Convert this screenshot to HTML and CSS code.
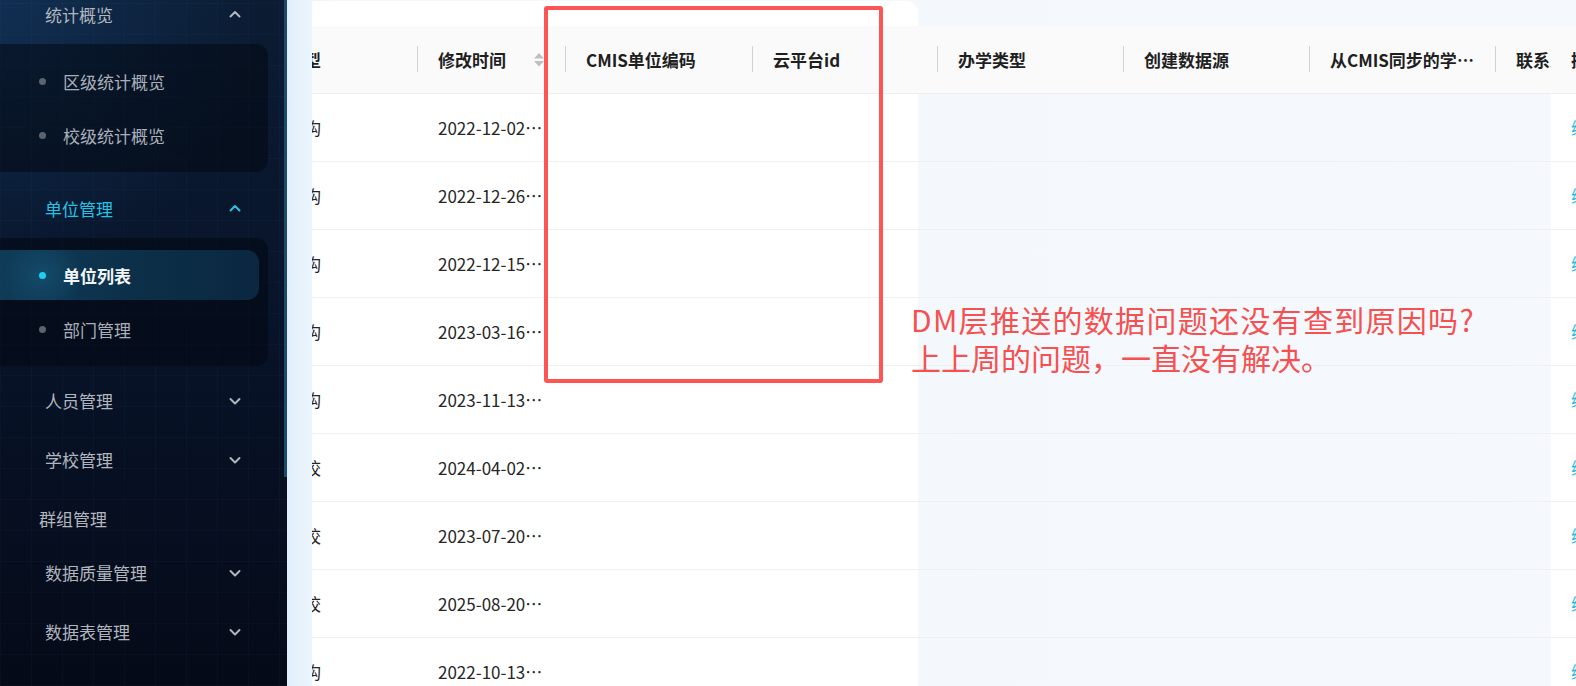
FILE: index.html
```html
<!DOCTYPE html>
<html lang="zh-CN">
<head>
    <meta charset="UTF-8">
    <meta name="viewport" content="width=device-width, initial-scale=1.0">
    <title>单位列表</title>
    <link rel="stylesheet" href="styles.css">
</head>
<body>
    <aside class="sidebar">
        <nav class="menu">
            <div class="menu-title first">
                <span>统计概览</span>
                <svg class="arrow" viewBox="0 0 12 8"><path d="M1.5 6.5 L6 2 L10.5 6.5"/></svg>
            </div>
            <div class="submenu">
                <div class="sub-item"><span class="dot"></span>区级统计概览</div>
                <div class="sub-item"><span class="dot"></span>校级统计概览</div>
            </div>

            <div class="menu-title open">
                <span>单位管理</span>
                <svg class="arrow" viewBox="0 0 12 8"><path d="M1.5 6.5 L6 2 L10.5 6.5"/></svg>
            </div>
            <div class="submenu">
                <div class="sub-item selected"><span class="dot"></span>单位列表</div>
                <div class="sub-item"><span class="dot"></span>部门管理</div>
            </div>

            <div class="menu-title">
                <span>人员管理</span>
                <svg class="arrow" viewBox="0 0 12 8"><path d="M1.5 2 L6 6.5 L10.5 2"/></svg>
            </div>
            <div class="menu-title">
                <span>学校管理</span>
                <svg class="arrow" viewBox="0 0 12 8"><path d="M1.5 2 L6 6.5 L10.5 2"/></svg>
            </div>
            <div class="menu-leaf">群组管理</div>
            <div class="menu-title">
                <span>数据质量管理</span>
                <svg class="arrow" viewBox="0 0 12 8"><path d="M1.5 2 L6 6.5 L10.5 2"/></svg>
            </div>
            <div class="menu-title">
                <span>数据表管理</span>
                <svg class="arrow" viewBox="0 0 12 8"><path d="M1.5 2 L6 6.5 L10.5 2"/></svg>
            </div>
        </nav>
        <div class="scroll-thumb"></div>
    </aside>

    <main class="main">
        <div class="card">
            <div class="card-top"></div>
            <div class="table">
                <div class="row head">
                    <div class="cell c-type">单位类型</div>
                    <div class="cell c-time th">
                        <span class="ellipsis">修改时间</span>
                        <svg class="sorter" viewBox="0 0 12 16">
                            <polygon points="1,6.5 6,1 11,6.5"/>
                            <polygon points="1,9 11,9 6,14.5"/>
                        </svg>
                    </div>
                    <div class="cell c-cmis th">CMIS单位编码</div>
                    <div class="cell c-cloud th">云平台id</div>
                    <div class="cell c-kind th">办学类型</div>
                    <div class="cell c-src th">创建数据源</div>
                    <div class="cell c-sync th"><span class="ellipsis">从CMIS同步的学校类型</span></div>
                    <div class="cell c-contact th">联系人</div>
                    <div class="cell c-op">操作</div>
                </div>

                <div class="row">
                    <div class="cell c-type">教育机构</div>
                    <div class="cell c-time"><span class="ellipsis">2022-12-02 10:21:36</span></div>
                    <div class="cell c-cmis"></div><div class="cell c-cloud"></div><div class="cell c-kind"></div>
                    <div class="cell c-src"></div><div class="cell c-sync"></div><div class="cell c-contact"></div>
                    <div class="cell c-op"><a class="link">编辑</a></div>
                </div>
                <div class="row">
                    <div class="cell c-type">教育机构</div>
                    <div class="cell c-time"><span class="ellipsis">2022-12-26 15:08:12</span></div>
                    <div class="cell c-cmis"></div><div class="cell c-cloud"></div><div class="cell c-kind"></div>
                    <div class="cell c-src"></div><div class="cell c-sync"></div><div class="cell c-contact"></div>
                    <div class="cell c-op"><a class="link">编辑</a></div>
                </div>
                <div class="row">
                    <div class="cell c-type">教育机构</div>
                    <div class="cell c-time"><span class="ellipsis">2022-12-15 09:44:50</span></div>
                    <div class="cell c-cmis"></div><div class="cell c-cloud"></div><div class="cell c-kind"></div>
                    <div class="cell c-src"></div><div class="cell c-sync"></div><div class="cell c-contact"></div>
                    <div class="cell c-op"><a class="link">编辑</a></div>
                </div>
                <div class="row">
                    <div class="cell c-type">教育机构</div>
                    <div class="cell c-time"><span class="ellipsis">2023-03-16 11:30:05</span></div>
                    <div class="cell c-cmis"></div><div class="cell c-cloud"></div><div class="cell c-kind"></div>
                    <div class="cell c-src"></div><div class="cell c-sync"></div><div class="cell c-contact"></div>
                    <div class="cell c-op"><a class="link">编辑</a></div>
                </div>
                <div class="row">
                    <div class="cell c-type">教育机构</div>
                    <div class="cell c-time"><span class="ellipsis">2023-11-13 16:52:27</span></div>
                    <div class="cell c-cmis"></div><div class="cell c-cloud"></div><div class="cell c-kind"></div>
                    <div class="cell c-src"></div><div class="cell c-sync"></div><div class="cell c-contact"></div>
                    <div class="cell c-op"><a class="link">编辑</a></div>
                </div>
                <div class="row">
                    <div class="cell c-type">中小学校</div>
                    <div class="cell c-time"><span class="ellipsis">2024-04-02 08:15:40</span></div>
                    <div class="cell c-cmis"></div><div class="cell c-cloud"></div><div class="cell c-kind"></div>
                    <div class="cell c-src"></div><div class="cell c-sync"></div><div class="cell c-contact"></div>
                    <div class="cell c-op"><a class="link">编辑</a></div>
                </div>
                <div class="row">
                    <div class="cell c-type">中小学校</div>
                    <div class="cell c-time"><span class="ellipsis">2023-07-20 14:03:58</span></div>
                    <div class="cell c-cmis"></div><div class="cell c-cloud"></div><div class="cell c-kind"></div>
                    <div class="cell c-src"></div><div class="cell c-sync"></div><div class="cell c-contact"></div>
                    <div class="cell c-op"><a class="link">编辑</a></div>
                </div>
                <div class="row">
                    <div class="cell c-type">中小学校</div>
                    <div class="cell c-time"><span class="ellipsis">2025-08-20 10:47:19</span></div>
                    <div class="cell c-cmis"></div><div class="cell c-cloud"></div><div class="cell c-kind"></div>
                    <div class="cell c-src"></div><div class="cell c-sync"></div><div class="cell c-contact"></div>
                    <div class="cell c-op"><a class="link">编辑</a></div>
                </div>
                <div class="row">
                    <div class="cell c-type">教育机构</div>
                    <div class="cell c-time"><span class="ellipsis">2022-10-13 17:26:33</span></div>
                    <div class="cell c-cmis"></div><div class="cell c-cloud"></div><div class="cell c-kind"></div>
                    <div class="cell c-src"></div><div class="cell c-sync"></div><div class="cell c-contact"></div>
                    <div class="cell c-op"><a class="link">编辑</a></div>
                </div>
            </div>
        </div>
    </main>

    <div class="mark-box"></div>
    <div class="mark-note"><span class="wide">DM层推送的数据问题还没有查到原因吗?</span><br>上上周的问题，一直没有解决。</div>
</body>
</html>
```

FILE: styles.css
```css
* {
    box-sizing: border-box;
}
body {
    margin: 0;
    height: 686px;
    display: flex;
    overflow: hidden;
    font-family: "Noto Sans CJK SC", "Noto Sans", sans-serif;
    font-size: 17px;
    position: relative;
}

/* sidebar */
.sidebar {
    width: 287px;
    flex-shrink: 0;
    position: relative;
    background:
        repeating-linear-gradient(90deg, rgba(90, 150, 210, 0.035) 0 1px, transparent 1px 31px),
        repeating-linear-gradient(0deg, rgba(90, 150, 210, 0.035) 0 1px, transparent 1px 31px),
        radial-gradient(ellipse 90% 40% at 0 0, rgba(24, 70, 120, 0.45), transparent),
        linear-gradient(180deg, #0b1c33 0%, #08142a 45%, #050a18 100%);
    color: #b1b6be;
}
.menu {
    margin-top: -16px;
    width: 284px;
}
.menu-title {
    height: 59px;
    display: flex;
    align-items: center;
    justify-content: space-between;
    padding: 0 43px 0 45px;
    margin-top: 5px;
}
.menu-title.first,
.menu-title.open {
    height: 60px;
}
.menu-title.first {
    margin-top: 0;
}
.menu-title.open {
    margin-top: 6px;
}
.menu-title + .menu-title,
.menu-leaf + .menu-title {
    margin-top: 0;
}
.menu-title.open {
    color: #25c3e3;
}
.arrow {
    width: 12px;
    height: 8px;
    fill: none;
    stroke: currentColor;
    stroke-width: 2;
    stroke-linecap: round;
    stroke-linejoin: round;
}
.menu-leaf {
    height: 54px;
    padding: 12px 0 0 39px;
    line-height: 36px;
}
.submenu {
    width: 268px;
    padding: 12px 0;
    display: flex;
    flex-direction: column;
    gap: 4px;
    background: rgba(2, 6, 14, 0.5);
    border-radius: 0 12px 12px 0;
}
.sub-item {
    height: 50px;
    width: 259px;
    display: flex;
    align-items: center;
    padding-left: 39px;
    border-radius: 0 12px 12px 0;
    color: #a9afb8;
}
.dot {
    width: 7px;
    height: 7px;
    border-radius: 50%;
    background: #5c636e;
    margin-right: 17px;
}
.sub-item.selected {
    color: #f2f5f8;
    font-weight: 600;
    background:
        radial-gradient(circle 40px at 43px 50%, rgba(30, 110, 150, 0.35), transparent),
        linear-gradient(90deg, #0f3b57 0%, #0c2f48 55%, #0b2741 100%);
}
.sub-item.selected .dot {
    background: #1fd0f3;
}
.scroll-thumb {
    position: absolute;
    right: 0;
    top: 0;
    width: 3px;
    height: 477px;
    background: #1a4a70;
}

/* main */
.main {
    flex: 1;
    min-width: 0;
    padding: 1px 0 0 25px;
    background:
        linear-gradient(90deg, #e1eefb 0, #eaf4fd 22px, #f3f8fd 60px, #f5f9fd 100%);
}
.card {
    overflow: hidden;
    height: 100%;
}
.card-top {
    width: 606px;
    height: 25px;
    background: #fff;
    border-radius: 0 12px 0 0;
}
.table {
    margin-left: -80px;
    width: 1344px;
}
.row {
    display: flex;
    height: 68px;
    border-bottom: 1px solid #efefef;
    background: linear-gradient(90deg, #fff 686px, transparent 686px);
    color: #262626;
}
.row.head {
    background: #fafafa;
    color: #1f1f1f;
    font-weight: 600;
}
.cell {
    position: relative;
    display: flex;
    align-items: center;
    padding: 0 21px;
    white-space: nowrap;
    overflow: hidden;
    flex-shrink: 0;
}
.th::before {
    content: "";
    position: absolute;
    left: -1px;
    top: 20px;
    width: 2px;
    height: 26px;
    background: #d3d3d3;
}
.ellipsis {
    overflow: hidden;
    text-overflow: ellipsis;
    min-width: 0;
}
.c-type { width: 185px; }
.c-time { width: 148px; justify-content: space-between; }
.c-cmis { width: 187px; }
.c-cloud { width: 185px; }
.c-kind { width: 186px; }
.c-src { width: 186px; }
.c-sync { width: 186px; }
.c-contact { width: 56px; padding-right: 0; }
.c-op {
    width: 80px;
    padding-left: 20px;
    background: #fff;
}
.head .c-op {
    background: #fafafa;
}
.head .c-time {
    padding-right: 20px;
}
.sorter {
    width: 12px;
    height: 16px;
    flex-shrink: 0;
    margin-left: 8px;
    fill: #bfbfbf;
}
.link {
    color: #1fb8dc;
}

/* annotation */
.mark-box {
    position: absolute;
    left: 544px;
    top: 6px;
    width: 339px;
    height: 377px;
    border: 4px solid #fd5454;
    border-radius: 3px;
}
.mark-note {
    position: absolute;
    left: 911px;
    top: 300px;
    font-size: 30px;
    line-height: 38px;
    color: #f65050;
    white-space: nowrap;
}
.mark-note .wide {
    letter-spacing: 1.3px;
}
```
